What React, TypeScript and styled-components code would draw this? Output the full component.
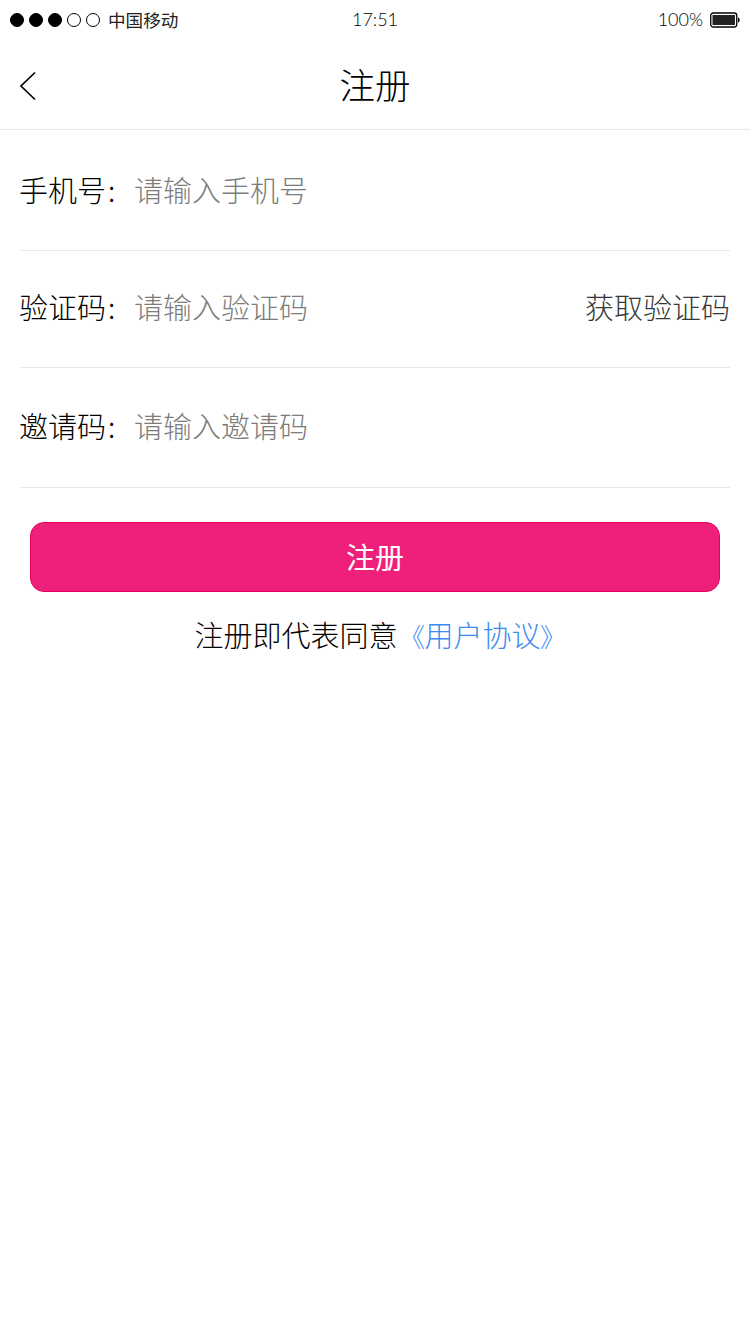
import styled, { createGlobalStyle } from 'styled-components';

const GlobalStyle = createGlobalStyle`
    html, body {
        margin: 0;
        padding: 0;
        background: #ffffff;
        font-family: "Noto Sans CJK SC", "Liberation Sans", sans-serif;
    }
`;

const Page = styled.div`
    width: 750px;
    height: 1334px;
    overflow: hidden;
    background: #ffffff;
`;

const StatusBar = styled.div`
    display: grid;
    grid-template-columns: 1fr auto 1fr;
    align-items: center;
    height: 40px;
    padding: 0 10px;
    box-sizing: border-box;
    color: #000000;
`;

const Signal = styled.div`
    display: flex;
    align-items: center;
    gap: 5px;
`;

const Dot = styled.span<{ $on: boolean }>`
    width: 14px;
    height: 14px;
    box-sizing: border-box;
    border-radius: 50%;
    border: 1px solid #000000;
    background: ${p => (p.$on ? '#000000' : 'transparent')};
`;

const Carrier = styled.span`
    margin-left: 3px;
    padding-bottom: 2px;
    font-size: 17.6px;
    font-weight: 400;
    color: #222222;
`;

const Clock = styled.span`
    padding-bottom: 2px;
    font-family: "Lato", sans-serif;
    font-weight: 300;
    font-size: 18px;
`;

const BatteryWrap = styled.div`
    display: flex;
    justify-content: flex-end;
    align-items: center;
    gap: 7px;
    font-family: "Lato", sans-serif;
    font-weight: 300;
    font-size: 18px;
`;

const BatteryText = styled.span`
    padding-bottom: 2px;
`;

const NavBar = styled.div`
    position: relative;
    display: flex;
    align-items: center;
    justify-content: center;
    height: 90px;
    padding-bottom: 2px;
    box-sizing: border-box;
    border-bottom: 1px solid #e8e8e8;
`;

const BackIcon = styled.svg`
    position: absolute;
    left: 19px;
    top: 31px;
`;

const Title = styled.h1`
    margin: 0;
    font-size: 35.5px;
    font-weight: 300;
    color: #000000;
`;

const Form = styled.div`
    padding: 0 20px;
`;

const Row = styled.div<{ $h: number; $pb: number }>`
    display: flex;
    align-items: center;
    height: ${p => p.$h}px;
    box-sizing: border-box;
    padding-bottom: ${p => p.$pb}px;
    border-bottom: 1px solid #e8e8e8;
    font-size: 29px;
    font-weight: 300;
`;

const Label = styled.span`
    display: flex;
    width: 115px;
    margin-left: -1px;
    color: #000000;
`;

const Colon = styled.span`
    margin-left: 2px;
`;

const Placeholder = styled.span`
    flex: 1;
    color: #7c7c7c;
`;

const CodeButton = styled.span`
    color: #383838;
`;

const SubmitButton = styled.button`
    display: block;
    width: 690px;
    height: 70px;
    margin: 34px 30px 0;
    padding: 0 0 3px;
    border: 1px solid #e8005f;
    border-radius: 14px;
    background: #ee207a;
    color: #ffffff;
    font-family: inherit;
    font-size: 29px;
    font-weight: 400;
`;

const Agreement = styled.div`
    display: flex;
    justify-content: center;
    align-items: baseline;
    margin-top: 21px;
    font-size: 29px;
    font-weight: 300;
    color: #000000;
`;

const AgreementLink = styled.a`
    margin: 0 2px 0 14px;
    color: #3d8bf0;
    font-feature-settings: "palt";
`;

const Bracket = styled.span`
    font-size: 26px;
`;

const App = () => {
    return (
        <Page>
            <GlobalStyle />
            <StatusBar>
                <Signal>
                    {[true, true, true, false, false].map((on, i) => <Dot key={i} $on={on} />)}
                    <Carrier>中国移动</Carrier>
                </Signal>
                <Clock>17:51</Clock>
                <BatteryWrap>
                    <BatteryText>100%</BatteryText>
                    <svg width="30" height="16" viewBox="0 0 30 16">
                        <rect x="0.75" y="1" width="26" height="14" rx="2.500" fill="none" stroke="#000" strokeWidth="1.3" />
                        <rect x="2.500" y="3" width="22.500" height="10" fill="#222" />
                        <path d="M28 5.500c1.200.3 1.600 1.200 1.600 2.500s-.4 2.200-1.600 2.500z" fill="#000" />
                    </svg>
                </BatteryWrap>
            </StatusBar>
            <NavBar>
                <BackIcon width="18" height="30" viewBox="0 0 18 30">
                    <path d="M16 1.500 2 15l14 13.500" fill="none" stroke="#000" strokeWidth="1.700" />
                </BackIcon>
                <Title>注册</Title>
            </NavBar>
            <Form>
                <Row $h={121} $pb={2}>
                    <Label>手机号<Colon>:</Colon></Label>
                    <Placeholder>请输入手机号</Placeholder>
                </Row>
                <Row $h={117} $pb={7}>
                    <Label>验证码<Colon>:</Colon></Label>
                    <Placeholder>请输入验证码</Placeholder>
                    <CodeButton>获取验证码</CodeButton>
                </Row>
                <Row $h={120} $pb={6}>
                    <Label>邀请码<Colon>:</Colon></Label>
                    <Placeholder>请输入邀请码</Placeholder>
                </Row>
            </Form>
            <SubmitButton>注册</SubmitButton>
            <Agreement>
                注册即代表同意
                <AgreementLink><Bracket>《</Bracket>用户协议<Bracket>》</Bracket></AgreementLink>
            </Agreement>
        </Page>
    );
};

export default App;
